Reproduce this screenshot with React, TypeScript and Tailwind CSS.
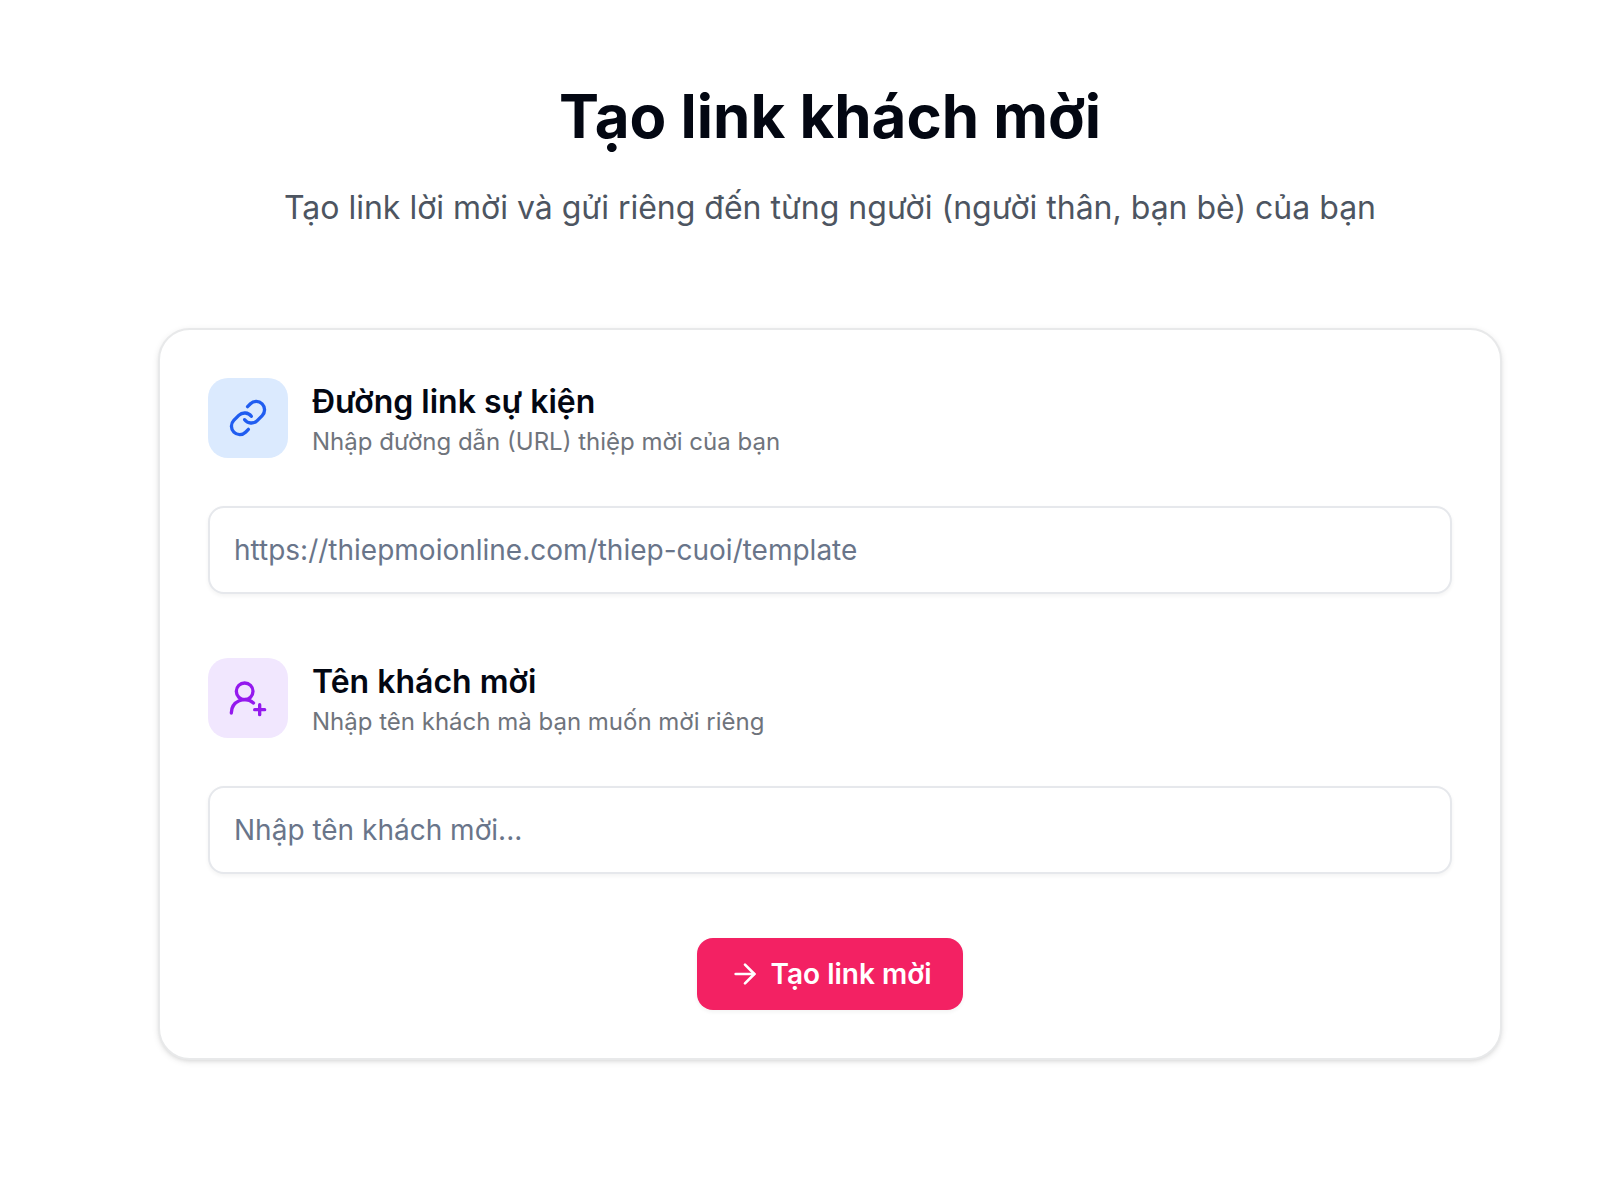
import type { ReactNode } from 'react'
import { ArrowRight } from 'lucide-react'

interface FieldProps {
  id: string
  type: string
  title: string
  description: string
  placeholder: string
  iconClass: string
  children: ReactNode
}

function Field({ id, type, title, description, placeholder, iconClass, children }: FieldProps) {
  return (
    <div>
      <div className="mb-12 flex items-center gap-6">
        <div className={`flex size-20 shrink-0 items-center justify-center rounded-[20px] ${iconClass}`}>
          <svg
            className="size-10"
            viewBox="0 0 24 24"
            fill="none"
            stroke="currentColor"
            strokeWidth="2"
            strokeLinecap="round"
            strokeLinejoin="round"
            aria-hidden="true"
          >
            {children}
          </svg>
        </div>
        <div>
          <label htmlFor={id} className="block text-[32px] leading-[48px] font-semibold text-gray-950">
            {title}
          </label>
          <p id={`${id}-hint`} className="text-2xl leading-8 text-[#6f747c]">
            {description}
          </p>
        </div>
      </div>
      <input
        id={id}
        type={type}
        aria-describedby={`${id}-hint`}
        placeholder={placeholder}
        className="h-22 w-full rounded-2xl border-2 border-[#e6e8ec] bg-white px-6 text-[28px] text-slate-900 shadow-[0_2px_4px_rgba(0,0,0,0.05)] outline-none placeholder:text-[#69758a] focus:border-slate-400"
      />
    </div>
  )
}

export default function App() {
  return (
    <main className="min-h-screen bg-white pt-20 pr-10 pb-30 pl-[78px] font-['Inter',sans-serif] text-gray-950">
      <header className="text-center">
        <h1 className="text-[60px] leading-[72px] font-bold">Tạo link khách mời</h1>
        <p className="mt-8 text-[32px] leading-[48px] text-[#4d5561]">
          Tạo link lời mời và gửi riêng đến từng người (người thân, bạn bè) của bạn
        </p>
      </header>

      <form
        className="mx-auto mt-24 max-w-[1344px] rounded-[32px] border-2 border-[#e8e9ea] bg-white p-12 shadow-[0_2px_6px_rgba(0,0,0,0.1),0_2px_4px_-2px_rgba(0,0,0,0.1)]"
        onSubmit={(e) => e.preventDefault()}
      >
        <div className="space-y-16">
          <Field
            id="event-link"
            type="url"
            title="Đường link sự kiện"
            description="Nhập đường dẫn (URL) thiệp mời của bạn"
            placeholder="https://thiepmoionline.com/thiep-cuoi/template"
            iconClass="bg-blue-100 text-[#205df0]"
          >
            <path d="M10 13a5 5 0 0 0 7.54.54l3-3a5 5 0 0 0-7.07-7.07l-1.72 1.71" />
            <path d="M14 11a5 5 0 0 0-7.54-.54l-3 3a5 5 0 0 0 7.07 7.07l1.71-1.71" />
          </Field>
          <Field
            id="guest-name"
            type="text"
            title="Tên khách mời"
            description="Nhập tên khách mà bạn muốn mời riêng"
            placeholder="Nhập tên khách mời..."
            iconClass="bg-[#f1e7fe] text-[#9419ee]"
          >
            <path d="M2 21a8 8 0 0 1 13.292-6" />
            <circle cx="10" cy="8" r="5" />
            <path d="M19 16v6" />
            <path d="M22 19h-6" />
          </Field>
        </div>
        <div className="mt-16 flex justify-center">
          <button
            type="submit"
            className="flex h-18 items-center gap-2.5 rounded-2xl bg-[#f32163] px-8 text-[28px] font-semibold text-white shadow-[0_2px_4px_rgba(0,0,0,0.05)] hover:bg-rose-600"
          >
            <ArrowRight className="size-8" aria-hidden="true" />
            Tạo link mời
          </button>
        </div>
      </form>
    </main>
  )
}
